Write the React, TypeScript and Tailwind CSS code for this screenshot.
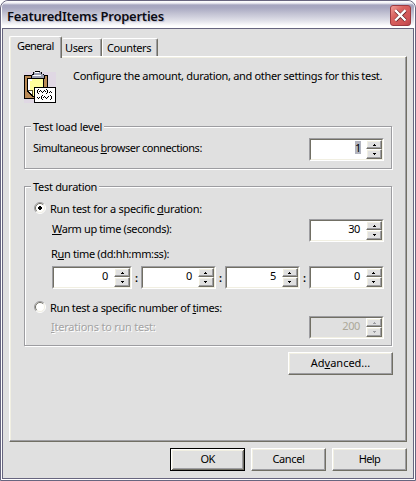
import type { ReactNode } from "react";

const raised =
  "border border-t-white border-l-white border-r-[#716f64] border-b-[#716f64] shadow-[inset_-1px_-1px_0_#9d9da1,inset_1px_1px_0_#f1efe2]";

function Arrow({ up, disabled }: { up?: boolean; disabled?: boolean }) {
  return (
    <svg width="3" height="2" viewBox="0 0 3 2" shapeRendering="crispEdges" fill={disabled ? "#9d9da1" : "#000"}>
      <path d={up ? "M1 0h1v1h1v1H0V1h1z" : "M0 0h3v1H2v1H1V1H0z"} />
    </svg>
  );
}

function Spinner({
  value,
  disabled,
  selected,
  className = "w-[75px]",
}: {
  value: string;
  disabled?: boolean;
  selected?: boolean;
  className?: string;
}) {
  return (
    <div
      className={`flex h-[23px] shrink-0 border border-t-[#9d9da1] border-l-[#9d9da1] border-r-white border-b-white ${className}`}
    >
      <div
        className={`flex flex-1 border border-t-[#716f64] border-l-[#716f64] border-r-[#f1efe2] border-b-[#f1efe2] ${
          disabled ? "bg-[#e0e0e0]" : "bg-white"
        }`}
      >
        <div className={`flex flex-1 items-start justify-end pr-[5px] ${disabled ? "text-[#aca899]" : ""}`}>
          <span
            className={
              selected
                ? "mt-px h-[13px] bg-[#b2b4bf] leading-[13px] tracking-[-0.3px]"
                : "mr-px leading-[15px] tracking-[-0.4px]"
            }
          >
            {value}
          </span>
        </div>
        <div className="flex w-4 flex-col bg-[#e0e0e0]">
          <div className={`flex h-[9px] items-center justify-center ${raised}`}>
            <Arrow up disabled={disabled} />
          </div>
          <div className={`flex h-[10px] items-center justify-center ${raised}`}>
            <Arrow disabled={disabled} />
          </div>
        </div>
      </div>
    </div>
  );
}

function Group({ title, className, children }: { title: ReactNode; className: string; children: ReactNode }) {
  return (
    <div
      className={`ml-[14px] w-[368px] border border-[#9d9da1] shadow-[1px_1px_0_#fff,inset_1px_1px_0_#fff] ${className}`}
    >
      <div className="-mt-2 ml-[6px] flex">
        <span className="bg-[#e0e0e0] pr-[2px] pl-[2px]">{title}</span>
      </div>
      {children}
    </div>
  );
}

function Radio({ checked }: { checked?: boolean }) {
  return (
    <svg width="12" height="12" viewBox="0 0 12 12" className="mt-px shrink-0">
      <circle cx="6" cy="6" r="5" fill="#fff" />
      <path d="M2.1 9.9A5.5 5.5 0 0 1 9.9 2.1" fill="none" stroke="#9d9da1" />
      <path d="M2.8 9.2A4.5 4.5 0 0 1 9.2 2.8" fill="none" stroke="#716f64" />
      <path d="M9.9 2.1A5.5 5.5 0 0 1 2.1 9.9" fill="none" stroke="#fff" />
      <path d="M9.2 2.8A4.5 4.5 0 0 1 2.8 9.2" fill="none" stroke="#f1efe2" />
      {checked && <path d="M5 4h2v1h1v2H7v1H5V7H4V5h1z" fill="#000" shapeRendering="crispEdges" />}
    </svg>
  );
}

function Button({ className, children }: { className: string; children: ReactNode }) {
  return (
    <button className={`flex h-[23px] items-start justify-center bg-[#e0e0e0] pt-[2px] ${className}`}>{children}</button>
  );
}

function ClipboardIcon() {
  return (
    <svg width="32" height="32" viewBox="0 0 32 32" shapeRendering="crispEdges" className="mt-[14px] ml-[14px] shrink-0">
      <path d="M0 1h32v31H0z" fill="#e0d8e4" />
      <path d="M0 4h24v24H0z" fill="#000" />
      <path d="M1 5h22v22H1z" fill="#b98a55" />
      <path d="M3 7h17v15h-1v4H8v-1H7v-1H6v-1H5v-1H4v-1H3z" fill="#000" />
      <path d="M4 8h15v17H9v-1H8v-1H7v-1H6v-1H5v-1H4z" fill="#ffff9c" />
      <path d="M4 8h2v11H4zM6 8h2v2H6z" fill="#fff" />
      <path d="M4 19h4v4H7v-1H6v-1H5v-1H4z" fill="#fff" />
      <path d="M4 19h4v1H4zM8 19h1v5H8z" fill="#5a5230" />
      <path d="M9 1h2V0h5v1h2v2h2v1h1v4H7V4h1V3h1z" fill="#000" />
      <path d="M10 1h7v2h2v1h1v3H8V4h2z" fill="#9a9eb0" />
      <path d="M11 1h4v1h-4zM9 4h8v1H9z" fill="#fff" />
      <path d="M10 16h22v16H10z" fill="#000" />
      <path d="M11 17h20v14H11z" fill="#fff" />
      <path
        d="M14 18h1v1h-1zM13 19h1v3h-1zM14 22h1v1h-1zM15 20h1v1h-1zM16 19h1v1h-1zM17 20h1v1h-1zM18 21h1v1h-1zM19 20h1v1h-1zM20 19h1v1h-1zM21 20h1v1h-1zM22 18h1v1h-1zM23 19h1v3h-1zM22 22h1v1h-1zM25 21h1v1h-1zM26 20h1v1h-1zM27 21h1v1h-1zM13 26h1v1h-1zM14 27h1v1h-1zM15 26h1v1h-1zM18 24h1v1h-1zM17 25h1v3h-1zM18 28h1v1h-1zM19 26h1v1h-1zM20 25h1v1h-1zM21 26h1v1h-1zM22 27h1v1h-1zM23 26h1v1h-1zM24 25h1v1h-1zM26 24h1v1h-1zM27 25h1v3h-1zM26 28h1v1h-1z"
        fill="#000"
      />
    </svg>
  );
}

export default function App() {
  return (
    <div className="h-[481px] w-[416px] bg-white font-['Noto_Sans','DejaVu_Sans',sans-serif] text-[11px] leading-[15px] whitespace-nowrap text-black">
      <div className="flex h-full flex-col overflow-hidden rounded-t-[8px] border border-[#67657f] bg-white px-px pb-px">
        <div className="flex h-[27px] shrink-0 items-start justify-between rounded-t-[6px] bg-[linear-gradient(180deg,#fff_0px,#f0f0f5_2px,#a5a5bf_4px,#a9a9c2_7px,#c4c4d4_13px,#e2e2ea_20px,#ffffff_25px)] pr-[3px] pl-[5px]">
          <span className="mt-[6px] text-[13px] leading-[18px] font-semibold tracking-[-0.24px] text-[#0c0c14] [text-shadow:1px_1px_1px_#b8b8cc]">
            FeaturedItems Properties
          </span>
          <div className="mt-1 flex h-[21px] w-[21px] items-center justify-center rounded-[3px] border border-[#9c3a40] bg-[linear-gradient(135deg,#f0a09a_0%,#d9625f_35%,#cf5255_80%,#b8434b_100%)]">
            <svg width="13" height="13" viewBox="0 0 13 13">
              <path d="M1.5 1.5L11.5 11.5M11.5 1.5L1.5 11.5" stroke="#5c2025" strokeWidth="3.6" />
              <path d="M1.2 1.2L11.5 11.5M11.5 1.2L1.2 11.5" stroke="#fff" strokeWidth="2.4" />
            </svg>
          </div>
        </div>

        <div className="flex flex-1 flex-col border border-[#67657f] bg-[#e0e0e0] pt-[7px] pl-[6px]">
          <div className="flex h-5 items-end">
            <div className="relative z-10 -mb-[2px] flex h-[22px] w-[53px] shrink-0 self-end rounded-t-[2px] border-t border-r border-l border-t-white border-r-[#716f64] border-l-white bg-[#e0e0e0] pt-px pl-[7px] shadow-[inset_-1px_0_0_#9d9da1,inset_1px_0_0_#f1efe2]">
              <span className="tracking-[-0.55px]">General</span>
            </div>
            <div className="flex h-[18px] w-10 rounded-t-[2px] border-t border-r border-t-white border-r-[#716f64] pt-px pl-[3px] shadow-[inset_-1px_0_0_#9d9da1]">
              <span className="tracking-[-0.4px]">Users</span>
            </div>
            <div className="flex h-[18px] w-14 rounded-t-[2px] border-t border-r border-l border-t-white border-r-[#716f64] border-l-white pt-px pl-1 shadow-[inset_-1px_0_0_#9d9da1]">
              <span className="tracking-[-0.38px]">Counters</span>
            </div>
          </div>

          <div className={`flex h-[386px] w-[398px] flex-col ${raised}`}>
            <div className="flex h-[69px] shrink-0">
              <ClipboardIcon />
              <p className="mt-[11px] ml-[17px] tracking-[-0.32px]">
                Configure the amount, duration, and other settings for this test.
              </p>
            </div>

            <Group title={<span className="tracking-[-0.22px]">Test load level</span>} className="h-[43px]">
              <div className="mt-1 flex justify-between pr-[7px] pl-2">
                <span className="mt-[2px] tracking-[-0.46px]">
                  Simultaneous <u>b</u>rowser connections:
                </span>
                <Spinner value="1" selected />
              </div>
            </Group>

            <Group title={<span className="tracking-[-0.3px]">Test duration</span>} className="mt-[17px] h-[160px]">
              <div className="mt-[7px] ml-[9px] flex">
                <Radio checked />
                <span className="ml-1 tracking-[-0.27px]">
                  Run test for a specific <u>d</u>uration:
                </span>
              </div>
              <div className="mt-[3px] flex justify-between pr-[7px] pl-[27px]">
                <span className="mt-[2px] tracking-[-0.38px]">
                  <u>W</u>arm up time (seconds):
                </span>
                <Spinner value="30" />
              </div>
              <div className="mt-1 pl-[26px] tracking-[-0.35px]">
                R<u>u</u>n time (dd:hh:mm:ss):
              </div>
              <div className="mt-[5px] flex justify-between pr-[7px] pl-[27px]">
                <Spinner value="0" className="w-[80px]" />
                <span className="mt-1 font-semibold">:</span>
                <Spinner value="0" />
                <span className="mt-1 font-semibold">:</span>
                <Spinner value="5" />
                <span className="mt-1 font-semibold">:</span>
                <Spinner value="0" />
              </div>
              <div className="mt-[11px] ml-[9px] flex">
                <Radio />
                <span className="ml-1 tracking-[-0.36px]">
                  Run test a specific number of <u>t</u>imes:
                </span>
              </div>
              <div className="mt-px flex justify-between pr-[7px] pl-[26px]">
                <span className="mt-[3px] tracking-[-0.22px] text-[#a3a3a3] [text-shadow:1px_1px_0_#fff]">
                  <u>I</u>terations to run test:
                </span>
                <Spinner value="200" disabled />
              </div>
            </Group>

            <Button className={`mt-[6px] ml-[278px] w-[105px] ${raised}`}>
              <span>
                Ad<u>v</u>anced...
              </span>
            </Button>
          </div>

          <div className="mt-[6px] ml-[161px] flex gap-[6px]">
            <Button className="w-[75px] border border-black shadow-[inset_1px_1px_0_#fff,inset_-1px_-1px_0_#716f64,inset_2px_2px_0_#f1efe2,inset_-2px_-2px_0_#9d9da1]">
              <span className="tracking-[-0.6px]">OK</span>
            </Button>
            <Button className={`w-[75px] ${raised}`}>
              <span className="tracking-[-0.35px]">Cancel</span>
            </Button>
            <Button className={`w-[75px] ${raised}`}>
              <span className="tracking-[-0.6px]">Help</span>
            </Button>
          </div>
        </div>
      </div>
    </div>
  );
}
